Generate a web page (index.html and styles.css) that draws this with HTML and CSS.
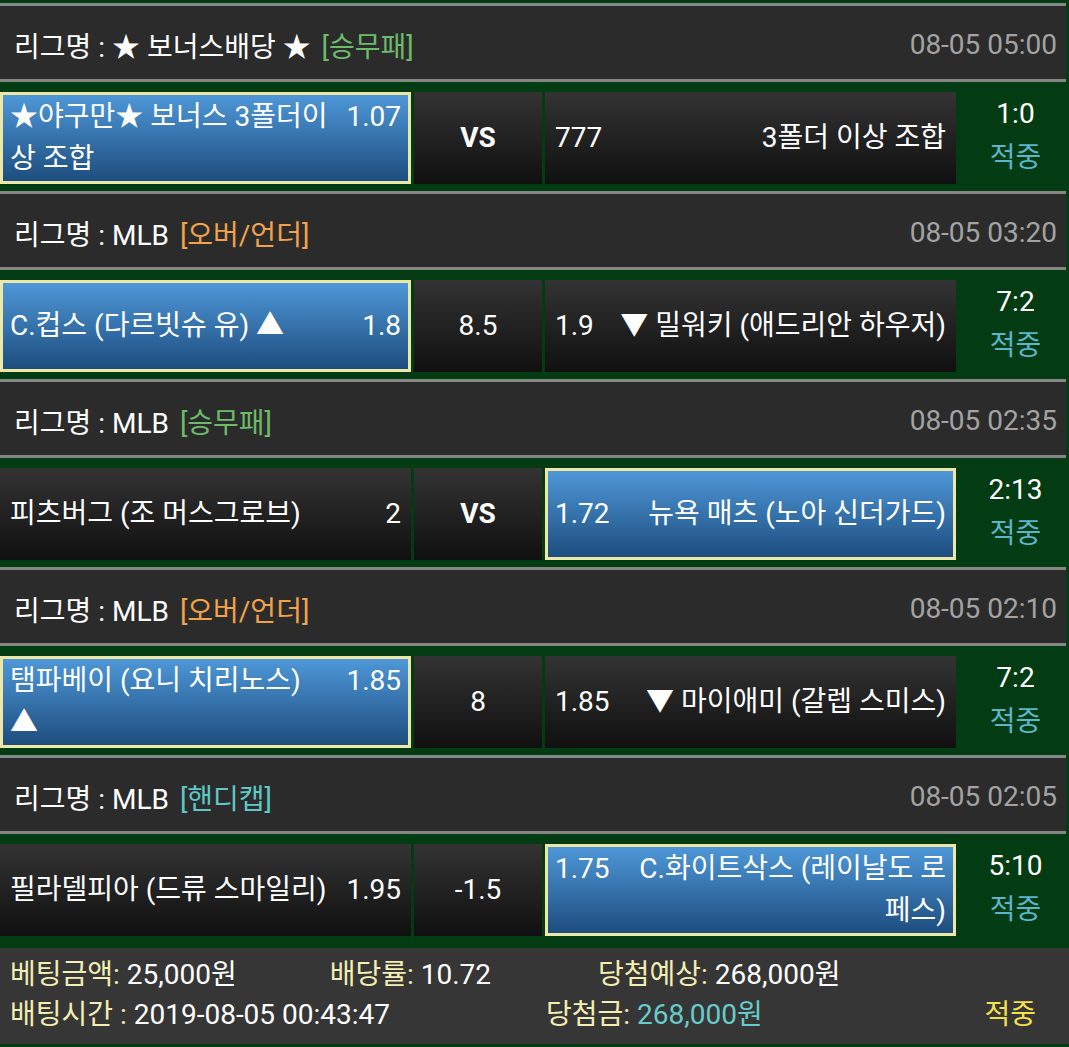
FILE: index.html
```html
<!DOCTYPE html>
<html lang="ko">
<head>
    <meta charset="UTF-8">
    <meta name="viewport" content="width=device-width, initial-scale=1.0">
    <title>베팅내역</title>
    <link rel="stylesheet" href="styles.css">
</head>
<body>
<div class="slip">
    <div class="game">
        <div class="league">
            <span class="name">리그명 : ★ 보너스배당 ★ <span class="type win">[승무패]</span></span>
            <span class="time">08-05 05:00</span>
        </div>
        <div class="match">
            <div class="team home picked"><div class="txt"><span class="odds">1.07</span>★야구만★ 보너스 3폴더이상 조합</div></div>
            <div class="mid vs">VS</div>
            <div class="team away"><div class="txt"><span class="odds">777</span>3폴더 이상 조합</div></div>
            <div class="result"><div>1:0</div><div class="hit">적중</div></div>
        </div>
    </div>

    <div class="game">
        <div class="league">
            <span class="name">리그명 : MLB <span class="type over">[오버/언더]</span></span>
            <span class="time">08-05 03:20</span>
        </div>
        <div class="match">
            <div class="team home picked"><div class="txt"><span class="odds">1.8</span>C.컵스 (다르빗슈 유) ▲</div></div>
            <div class="mid">8.5</div>
            <div class="team away"><div class="txt"><span class="odds">1.9</span>▼ 밀워키 (애드리안 하우저)</div></div>
            <div class="result"><div>7:2</div><div class="hit">적중</div></div>
        </div>
    </div>

    <div class="game">
        <div class="league">
            <span class="name">리그명 : MLB <span class="type win">[승무패]</span></span>
            <span class="time">08-05 02:35</span>
        </div>
        <div class="match">
            <div class="team home"><div class="txt"><span class="odds">2</span>피츠버그 (조 머스그로브)</div></div>
            <div class="mid vs">VS</div>
            <div class="team away picked"><div class="txt"><span class="odds">1.72</span>뉴욕 매츠 (노아 신더가드)</div></div>
            <div class="result"><div>2:13</div><div class="hit">적중</div></div>
        </div>
    </div>

    <div class="game">
        <div class="league">
            <span class="name">리그명 : MLB <span class="type over">[오버/언더]</span></span>
            <span class="time">08-05 02:10</span>
        </div>
        <div class="match">
            <div class="team home picked"><div class="txt"><span class="odds">1.85</span>탬파베이 (요니 치리노스) ▲</div></div>
            <div class="mid">8</div>
            <div class="team away"><div class="txt"><span class="odds">1.85</span>▼ 마이애미 (갈렙 스미스)</div></div>
            <div class="result"><div>7:2</div><div class="hit">적중</div></div>
        </div>
    </div>

    <div class="game">
        <div class="league">
            <span class="name">리그명 : MLB <span class="type handi">[핸디캡]</span></span>
            <span class="time">08-05 02:05</span>
        </div>
        <div class="match">
            <div class="team home"><div class="txt"><span class="odds">1.95</span>필라델피아 (드류 스마일리)</div></div>
            <div class="mid">-1.5</div>
            <div class="team away picked"><div class="txt"><span class="odds">1.75</span>C.화이트삭스 (레이날도 로페스)</div></div>
            <div class="result"><div>5:10</div><div class="hit">적중</div></div>
        </div>
    </div>
</div>

<div class="summary">
    <div class="line">
        <span class="cell amount"><b>베팅금액:</b> 25,000원</span>
        <span class="cell rate"><b>배당률:</b> 10.72</span>
        <span class="cell expect"><b>당첨예상:</b> 268,000원</span>
    </div>
    <div class="line">
        <span class="cell when"><b>배팅시간 :</b> 2019-08-05 00:43:47</span>
        <span class="cell won"><b>당첨금:</b> <em>268,000원</em></span>
        <span class="cell status">적중</span>
    </div>
</div>
</body>
</html>
```

FILE: styles.css
```css
body {
    margin: 0;
    padding-top: 3px;
    background-color: #033b13;
    color: #fff;
    font-family: Roboto, 'Noto Sans CJK KR', sans-serif;
    font-size: 28px;
}

.game {
    margin-bottom: 8px;
}

.league {
    display: flex;
    align-items: center;
    justify-content: space-between;
    box-sizing: border-box;
    height: 79px;
    margin-right: 3px;
    padding: 4px 9px 0 14px;
    background-color: #2b2b2b;
    border-top: 3px solid #858784;
    border-bottom: 3px solid #858784;
}

.type {
    margin-left: 4px;
}

.win {
    color: #6dbb6a;
}

.over {
    color: #f2a24a;
}

.handi {
    color: #5ec8c6;
}

.time {
    color: #a3a3a3;
}

.match {
    display: grid;
    grid-template-columns: 411px 128px 411px 1fr;
    column-gap: 3px;
    height: 91px;
    margin-top: 10px;
}

.team,
.mid {
    display: flex;
    align-items: center;
    background: linear-gradient(#333333, #101010);
    line-height: 42px;
}

.team {
    padding: 0 10px;
}

.txt {
    width: 100%;
}

.home .odds {
    float: right;
    margin-left: 12px;
}

.away .txt {
    text-align: right;
}

.away .odds {
    float: left;
    margin-right: 12px;
}

.picked {
    padding: 0 7px;
    border: 3px solid #eee8a6;
    background: linear-gradient(#4e97d8, #1d4d7e);
}

.mid {
    justify-content: center;
}

.vs {
    font-weight: bold;
}

.result {
    display: flex;
    flex-direction: column;
    align-items: center;
    justify-content: center;
    padding-left: 3px;
    padding-bottom: 4px;
    line-height: 44px;
}

.hit {
    color: #5bb6c9;
}

.summary {
    margin-top: 13px;
    padding: 7px 10px 9px;
    background-color: #363636;
}

.line {
    display: flex;
    line-height: 40px;
}

.summary b {
    font-weight: normal;
    color: #f4eeb2;
}

.summary em {
    font-style: normal;
    color: #66cccc;
}

.rate {
    margin-left: 93px;
}

.expect {
    margin-left: 107px;
}

.won {
    margin-left: 156px;
}

.status {
    margin-left: auto;
    margin-right: 23px;
    color: #f5e14c;
}
```
